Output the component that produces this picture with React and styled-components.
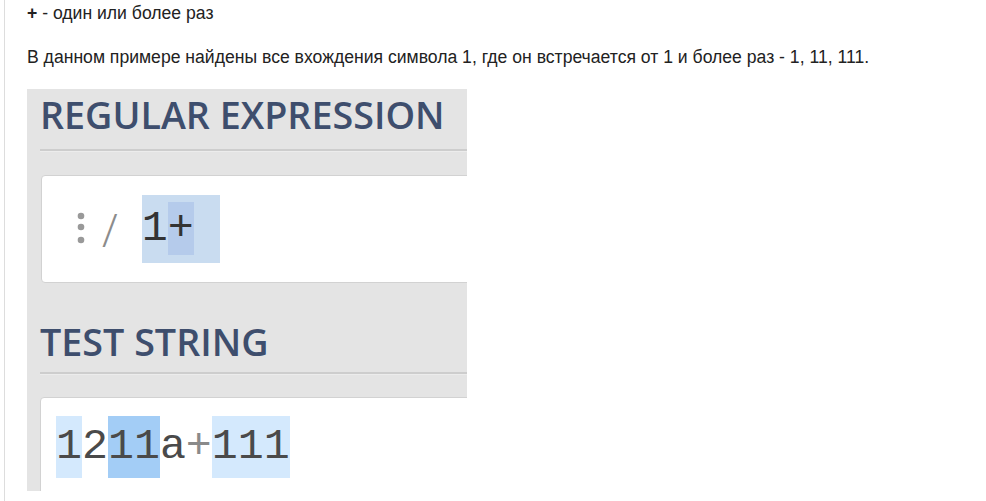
import styled, { createGlobalStyle } from "styled-components";

const GlobalStyle = createGlobalStyle`
    html, body {
        margin: 0;
        padding: 0;
        background: #ffffff;
    }
`;

const Page = styled.div`
    min-height: 501px;
    margin-left: 4px;
    border-left: 1px solid #dddddd;
    padding-left: 22px;
    font-family: "Liberation Sans", Arial, sans-serif;
    font-size: 17.6px;
    line-height: 20px;
    color: #222222;
    overflow: hidden;
`;

const Para = styled.p`
    margin: 0;
    padding-top: ${(p) => p.$top}px;
    white-space: nowrap;
`;

// the screenshot of the regex tester, cropped on the right and bottom
const Shot = styled.div`
    margin-top: 22px;
    width: 440px;
    height: 402px;
    overflow: hidden;
    background: #e4e4e4;
    padding: 4px 0 0 13px;
    box-sizing: border-box;
`;

const Heading = styled.h2`
    margin: ${(p) => p.$top}px 0 0;
    font-family: "Open Sans", "Noto Sans", sans-serif;
    font-weight: 600;
    font-size: 37.7px;
    line-height: 44px;
    color: #3e4e6d;
    white-space: nowrap;
`;

const Rule = styled.div`
    margin-top: ${(p) => p.$top}px;
    height: 2px;
    background: #cdcdcd;
    border-bottom: 1px solid #ececec;
`;

const InputBox = styled.div`
    display: flex;
    align-items: ${(p) => (p.$center ? "center" : "flex-start")};
    margin-top: ${(p) => p.$top}px;
    margin-left: ${(p) => p.$left}px;
    width: 600px;
    height: ${(p) => p.$height}px;
    padding-left: ${(p) => p.$padLeft}px;
    padding-top: ${(p) => p.$padTop || 0}px;
    box-sizing: border-box;
    background: #ffffff;
    border: 1px solid #d2d2d2;
    border-radius: 4px;
`;

const Slash = styled.span`
    margin: 0 24px 0 16px;
    font-family: "Open Sans", "Noto Sans", sans-serif;
    font-weight: 300;
    font-size: 46px;
    line-height: 46px;
    color: #8c8c8c;
`;

const Group = styled.div`
    display: flex;
    background: #c9dcf0;
`;

const Cell = styled.span`
    display: block;
    width: 1ch;
    height: ${(p) => p.$h}px;
    font-family: "Liberation Mono", "DejaVu Sans Mono", monospace;
    font-size: 43.3px;
    line-height: ${(p) => p.$h}px;
    color: ${(p) => p.$color || "#4a4a4a"};
    background: ${(p) =>
        p.$tone === "light"
            ? "#d4e9fd"
            : p.$tone === "dark"
            ? "#a3cdf6"
            : p.$tone === "inner"
            ? "linear-gradient(to bottom, transparent 7px, #b5cbeb 7px, #b5cbeb 60px, transparent 60px)"
            : "transparent"};
`;

const Line = styled.div`
    display: flex;
`;

function MenuDots() {
    return (
        <svg width="10" height="34" viewBox="0 0 10 34" aria-hidden="true">
            <circle cx="5" cy="4" r="3.3" fill="#999999" />
            <circle cx="5" cy="15" r="3.3" fill="#999999" />
            <circle cx="5" cy="28" r="3.3" fill="#999999" />
        </svg>
    );
}

const testChars = [
    ["1", "light"],
    ["2", null],
    ["1", "dark"],
    ["1", "dark"],
    ["a", null],
    ["+", null, "#8a8a8a"],
    ["1", "light"],
    ["1", "light"],
    ["1", "light"],
];

export default function App() {
    return (
        <>
            <GlobalStyle />
            <Page>
                <Para $top={3}>
                    <b>+</b> - один или более раз
                </Para>
                <Para $top={24}>
                    В данном примере найдены все вхождения символа 1, где он встречается от 1 и более раз - 1, 11, 111.
                </Para>

                <Shot>
                    <Heading $top={0}>REGULAR EXPRESSION</Heading>
                    <Rule $top={12} />
                    <InputBox $center $top={23} $left={1} $height={108} $padLeft={34}>
                        <MenuDots />
                        <Slash>/</Slash>
                        <Group>
                            <Cell $h={68} $color="#333333">1</Cell>
                            <Cell $h={68} $color="#333333" $tone="inner">+</Cell>
                            <Cell $h={68} />
                        </Group>
                    </InputBox>

                    <Heading $top={37}>TEST STRING</Heading>
                    <Rule $top={8} />
                    <InputBox $top={22} $left={0} $height={140} $padLeft={15} $padTop={18}>
                        <Line>
                            {testChars.map(([ch, tone, color], i) => (
                                <Cell key={i} $h={62} $tone={tone} $color={color}>
                                    {ch}
                                </Cell>
                            ))}
                        </Line>
                    </InputBox>
                </Shot>
            </Page>
        </>
    );
}
